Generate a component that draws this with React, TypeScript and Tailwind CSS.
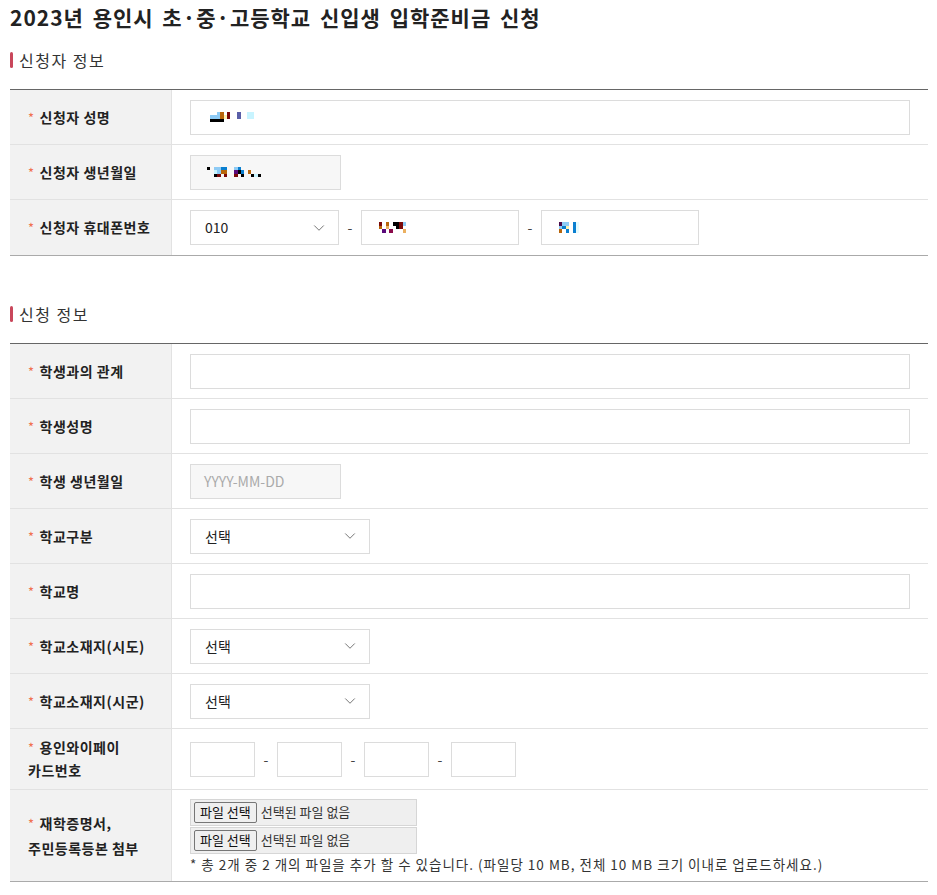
import { ChevronDown } from "lucide-react";
import type { ReactNode } from "react";

const PALETTE: Record<string, string> = {
  K: "#000000",
  b: "#8ecbf5",
  B: "#0a7fd0",
  o: "#b8650a",
  y: "#fff2b0",
  r: "#7a0a0a",
  s: "#5a5fa8",
  c: "#c8f4ff",
  p: "#5a0a7a",
  m: "#8a0a4a",
  P: "#4a0a4a",
  w: "#e6fcff",
  g: "#ebb060",
};

// redacted values in the screenshot are mosaics
function Mosaic({ rows }: { rows: string[] }) {
  return (
    <div className="flex flex-col">
      {rows.map((row, i) => (
        <div key={i} className="flex">
          {row.split("").map((ch, j) => (
            <span
              key={j}
              className="block h-[3.5px] w-[3.4px]"
              style={{ background: PALETTE[ch] ?? "transparent" }}
            />
          ))}
        </div>
      ))}
    </div>
  );
}

function SectionTitle({ children }: { children: ReactNode }) {
  return (
    <h3 className="flex items-center gap-[6px] text-[16px] font-normal leading-[20px] tracking-[1.5px] text-[#333]">
      <span className="block h-[16px] w-[3px] rounded-full bg-[#c9475b]" />
      {children}
    </h3>
  );
}

function Row({
  label,
  children,
  h = "h-[55px]",
}: {
  label: ReactNode;
  children: ReactNode;
  h?: string;
}) {
  return (
    <div className={`flex border-b border-[#e2e2e2] last:border-b-0 ${h}`}>
      <div className="flex w-[162px] shrink-0 items-center border-r border-[#e2e2e2] bg-[#f2f2f2] pl-[18px] text-[14px] font-bold leading-[23px] tracking-[0.5px] text-[#222]">
        {label}
      </div>
      <div className="flex flex-1 items-center pl-[18px] pr-[18px]">{children}</div>
    </div>
  );
}

function Star() {
  return <span className="mr-[5px] text-[13px] font-normal text-[#f07050]">*</span>;
}

function Input({ w = "w-full", gray, children }: { w?: string; gray?: boolean; children?: ReactNode }) {
  return (
    <div
      className={`flex h-[35px] items-center border border-[#dcdcdc] px-[13px] text-[14px] ${w} ${
        gray ? "bg-[#f7f7f7]" : "bg-white"
      }`}
    >
      {children}
    </div>
  );
}

function Select({ w, value }: { w: string; value: string }) {
  return (
    <div
      className={`flex h-[35px] items-center justify-between border border-[#dcdcdc] bg-white pl-[14px] pr-[10px] text-[14px] text-[#222] ${w}`}
    >
      <span>{value}</span>
      <ChevronDown size={18} strokeWidth={1.2} className="text-[#666]" />
    </div>
  );
}

function Dash() {
  return <span className="w-[22px] text-center text-[14px] text-[#444]">-</span>;
}

function FileBox() {
  return (
    <div className="flex h-[27px] w-[227px] items-center border border-[#d6d6d6] bg-[#efefef] pl-[3px] text-[13px] text-[#333]">
      <span className="mr-[4px] flex h-[21px] items-center rounded-[2px] border border-[#767676] bg-[#efefef] px-[5px] text-[13px] text-[#111]">
        파일 선택
      </span>
      선택된 파일 없음
    </div>
  );
}

export default function App() {
  return (
    <div
      className="min-h-[895px] bg-white pl-[10px] pr-[9px] pt-[2px] text-[#222]"
      style={{ fontFamily: '"Noto Sans CJK KR", "Noto Sans", sans-serif' }}
    >
      <h2 className="text-[21px] font-bold leading-[30px] tracking-[1px] text-[#222] [word-spacing:3px]">
        2023년 용인시 초·중·고등학교 신입생 입학준비금 신청
      </h2>

      <div className="mt-[18px]">
        <SectionTitle>신청자 정보</SectionTitle>
      </div>
      <div className="mt-[19px] border-t border-b border-t-[#666] border-b-[#aaa]">
        <Row label={<span><Star />신청자 성명</span>}>
          <Input>
            <div className="ml-[6px]">
              <Mosaic rows={["..bo.r..s..cc", "bbboyr..s..cc", "KKKK........."]} />
            </div>
          </Input>
        </Row>
        <Row label={<span><Star />신청자 생년월일</span>}>
          <Input w="w-[151px]" gray>
            <div className="ml-[3px]">
              <Mosaic rows={["K.bbBB..bB......", "..cboo..pKB.o...", "..Kr.r..r.K..KcK"]} />
            </div>
          </Input>
        </Row>
        <Row label={<span><Star />신청자 휴대폰번호</span>}>
          <Select w="w-[149px]" value="010" />
          <Dash />
          <Input w="w-[158px]">
            <div className="ml-[4px]">
              <Mosaic rows={["r.o.KKrb", "o.g..Kr.", ".p.m...g"]} />
            </div>
          </Input>
          <Dash />
          <Input w="w-[158px]">
            <div className="ml-[4px]">
              <Mosaic rows={["Pbb.Bw", "bBy.Bw", "o.B.Bw"]} />
            </div>
          </Input>
        </Row>
      </div>

      <div className="mt-[48px]">
        <SectionTitle>신청 정보</SectionTitle>
      </div>
      <div className="mt-[19px] border-t border-b border-t-[#666] border-b-[#aaa]">
        <Row label={<span><Star />학생과의 관계</span>}>
          <Input />
        </Row>
        <Row label={<span><Star />학생성명</span>}>
          <Input />
        </Row>
        <Row label={<span><Star />학생 생년월일</span>}>
          <Input w="w-[151px]" gray>
            <span className="text-[#aaa]">YYYY-MM-DD</span>
          </Input>
        </Row>
        <Row label={<span><Star />학교구분</span>}>
          <Select w="w-[180px]" value="선택" />
        </Row>
        <Row label={<span><Star />학교명</span>}>
          <Input />
        </Row>
        <Row label={<span><Star />학교소재지(시도)</span>}>
          <Select w="w-[180px]" value="선택" />
        </Row>
        <Row label={<span><Star />학교소재지(시군)</span>}>
          <Select w="w-[180px]" value="선택" />
        </Row>
        <Row
          h="h-[61px]"
          label={
            <span>
              <Star />용인와이페이
              <br />
              카드번호
            </span>
          }
        >
          <Input w="w-[65px]" />
          <Dash />
          <Input w="w-[65px]" />
          <Dash />
          <Input w="w-[65px]" />
          <Dash />
          <Input w="w-[65px]" />
        </Row>
        <Row
          h="h-[91px]"
          label={
            <span className="leading-[24px]">
              <Star />재학증명서,
              <br />
              주민등록등본 첨부
            </span>
          }
        >
          <div className="flex flex-col">
            <FileBox />
            <div className="mt-[1px]">
              <FileBox />
            </div>
            <p className="mt-[1px] text-[13.5px] leading-[18px] tracking-[1px] text-[#333]">
              * 총 2개 중 2 개의 파일을 추가 할 수 있습니다. (파일당 10 MB, 전체 10 MB 크기 이내로 업로드하세요.)
            </p>
          </div>
        </Row>
      </div>
    </div>
  );
}
